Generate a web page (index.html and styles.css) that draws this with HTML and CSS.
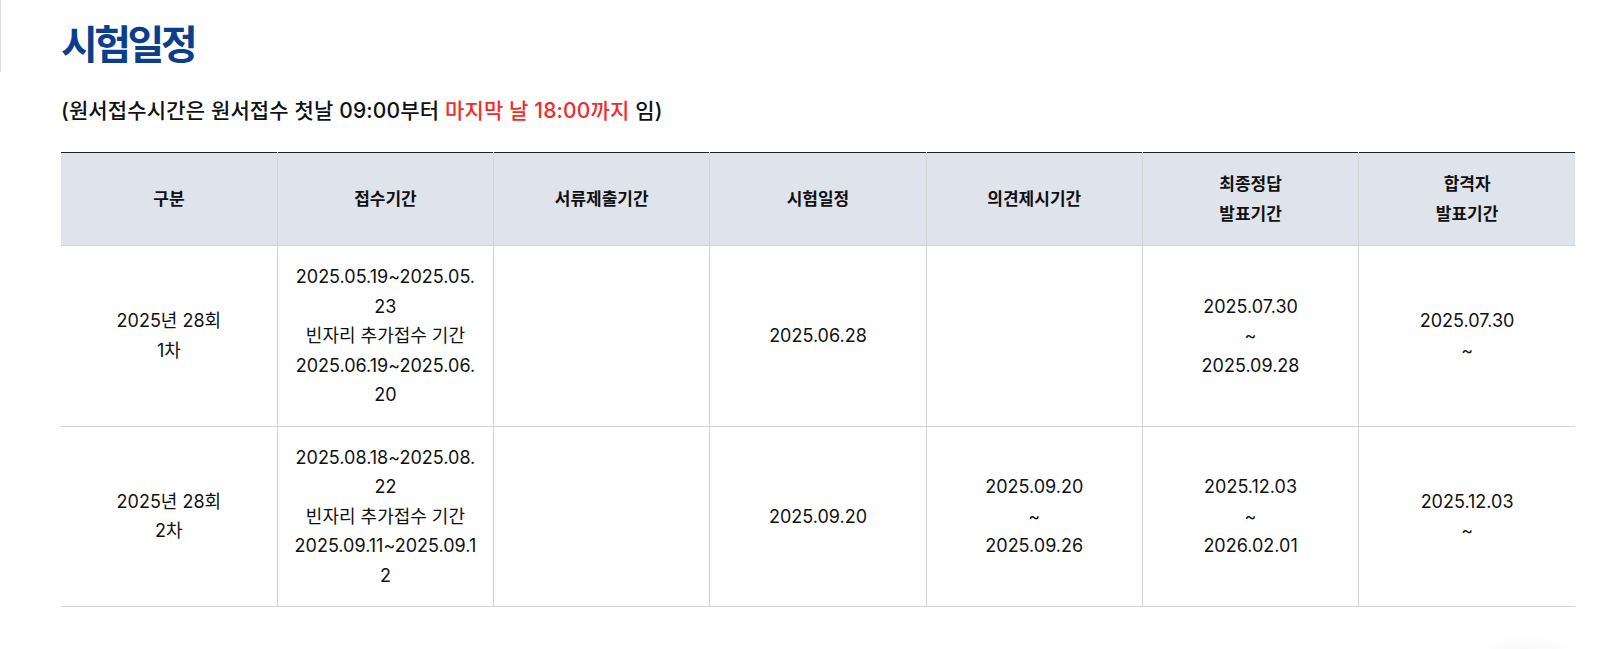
FILE: index.html
```html
<!DOCTYPE html>
<html lang="ko">
<head>
<meta charset="utf-8">
<title>시험일정</title>
<link rel="stylesheet" href="styles.css">
</head>
<body>
<div class="page">
  <div class="rail"></div>
  <main class="content">
    <h2 class="title">시험일정</h2>
    <p class="notice">(원서접수시간은 원서접수 첫날 09:00부터 <span class="red">마지막 날 18:00까지</span> 임)</p>
    <table class="schedule">
      <thead>
        <tr>
          <th>구분</th>
          <th>접수기간</th>
          <th>서류제출기간</th>
          <th>시험일정</th>
          <th>의견제시기간</th>
          <th>최종정답<br>발표기간</th>
          <th>합격자<br>발표기간</th>
        </tr>
      </thead>
      <tbody>
        <tr>
          <td>2025년 28회<br>1차</td>
          <td>2025.05.19~2025.05.23<br>빈자리 추가접수 기간<br>2025.06.19~2025.06.20</td>
          <td></td>
          <td>2025.06.28</td>
          <td></td>
          <td>2025.07.30<br>~<br>2025.09.28</td>
          <td>2025.07.30<br>~</td>
        </tr>
        <tr>
          <td>2025년 28회<br>2차</td>
          <td>2025.08.18~2025.08.22<br>빈자리 추가접수 기간<br>2025.09.11~2025.09.12</td>
          <td></td>
          <td>2025.09.20</td>
          <td>2025.09.20<br>~<br>2025.09.26</td>
          <td>2025.12.03<br>~<br>2026.02.01</td>
          <td>2025.12.03<br>~</td>
        </tr>
      </tbody>
    </table>
  </main>
</div>
<div class="float-shadow"></div>
</body>
</html>
```

FILE: styles.css
```css
html, body {
  margin: 0;
  padding: 0;
  background: #fff;
}
body {
  font-family: "Inter", "Noto Sans CJK KR", sans-serif;
  color: #111;
  overflow: hidden;
}
.page {
  display: flex;
  align-items: flex-start;
}
.rail {
  width: 1px;
  height: 72px;
  background: #dcdcdc;
  flex: none;
}
.content {
  margin-left: 60px;
  width: 1514px;
}
.title {
  margin: 21px 0 0;
  font-size: 40px;
  line-height: 48px;
  font-weight: 700;
  letter-spacing: -3.5px;
  color: #0b3f8c;
}
.notice {
  margin: 28px 0 0;
  font-size: 21px;
  line-height: 28px;
  font-weight: 500;
  letter-spacing: 0.15px;
  color: #111;
}
.red {
  color: #f52a2a;
}
.schedule {
  margin-top: 27px;
  width: 1514px;
  table-layout: fixed;
  border-collapse: collapse;
  border-top: 1px solid #222;
}
.schedule th,
.schedule td {
  padding: 16px 15px;
  text-align: center;
  vertical-align: middle;
  border-left: 1px solid #d4d4d4;
  border-bottom: 1px solid #d4d4d4;
  word-break: break-all;
}
.schedule th:first-child,
.schedule td:first-child {
  border-left: none;
}
.schedule th {
  background: #dfe3ec;
  font-size: 17px;
  line-height: 30px;
  font-weight: 700;
  height: 60px;
}
.schedule td {
  font-size: 18px;
  line-height: 29.5px;
  font-weight: 400;
}
.float-shadow {
  position: fixed;
  left: 1478px;
  top: 654px;
  width: 96px;
  height: 96px;
  border-radius: 50%;
  background: #fff;
  box-shadow: 0 -2px 28px rgba(0, 0, 0, 0.07);
}
```
